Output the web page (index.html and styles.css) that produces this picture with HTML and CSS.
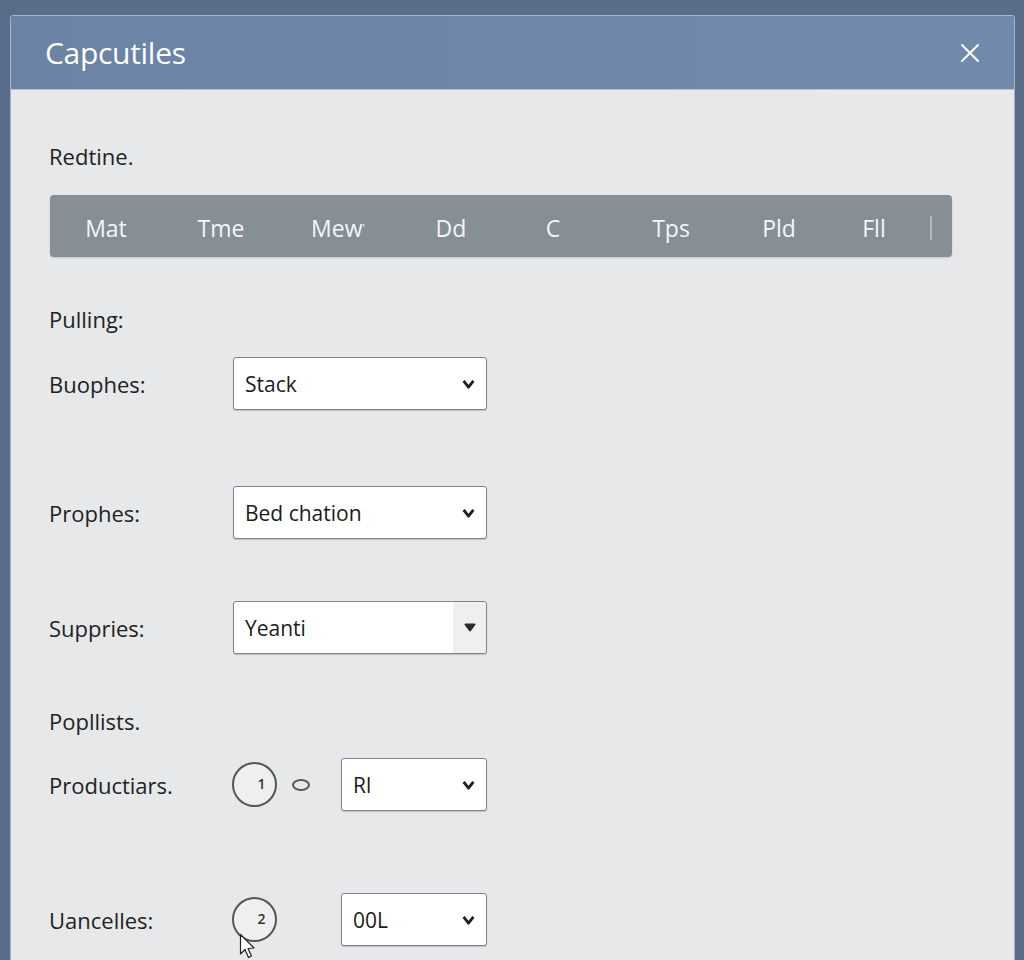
FILE: index.html
```html
<!DOCTYPE html>
<html lang="en">
	<head>
		<title>Capcutiles</title>
		<meta name="viewport" content="width=device-width, initial-scale=1">
		<link rel="stylesheet" href="styles.css">
	</head>
	<body>
		<div class="dialog">
			<div class="dialog-header">
				<h1>Capcutiles</h1>
				<button class="close-btn" aria-label="Close">
					<svg width="20" height="20" viewBox="0 0 20 20"><path d="M2 2 L18 18 M18 2 L2 18" stroke="#fff" stroke-width="2" stroke-linecap="round"/></svg>
				</button>
			</div>

			<div class="dialog-body">
				<div class="section-title">Redtine.</div>

				<div class="tab-bar">
					<span class="tab">Mat</span>
					<span class="tab">Tme</span>
					<span class="tab">Mew<span class="tick">'</span></span>
					<span class="tab">Dd</span>
					<span class="tab">C</span>
					<span class="tab">Tps</span>
					<span class="tab">Pld</span>
					<span class="tab">Fll</span>
					<span class="tab-sep"></span>
				</div>

				<div class="section-title pulling">Pulling:</div>

				<div class="field-row">
					<label>Buophes:</label>
					<div class="select">
						<span>Stack</span>
						<svg class="chevron" width="13" height="10" viewBox="0 0 13 10"><path d="M1.6 1.8 L6.5 8.2 L11.4 1.8" fill="none" stroke="#1e1e1e" stroke-width="2.8" stroke-linejoin="round"/></svg>
					</div>
				</div>

				<div class="field-row wide">
					<label>Prophes:</label>
					<div class="select">
						<span>Bed chation</span>
						<svg class="chevron" width="13" height="10" viewBox="0 0 13 10"><path d="M1.6 1.8 L6.5 8.2 L11.4 1.8" fill="none" stroke="#1e1e1e" stroke-width="2.8" stroke-linejoin="round"/></svg>
					</div>
				</div>

				<div class="field-row mid">
					<label>Suppries:</label>
					<div class="select has-button">
						<span>Yeanti</span>
						<span class="select-button">
							<svg width="12" height="9" viewBox="0 0 12 9"><path d="M1.5 1.5 L10.5 1.5 L6 7.5 Z" fill="#2a2a2a" stroke="#2a2a2a" stroke-width="2" stroke-linejoin="round"/></svg>
						</span>
					</div>
				</div>

				<div class="section-title lists">Popllists.</div>

				<div class="field-row near">
					<label class="short">Productiars.</label>
					<span class="step">1</span>
					<span class="oval"></span>
					<div class="select small">
						<span>Rl</span>
						<svg class="chevron" width="13" height="10" viewBox="0 0 13 10"><path d="M1.6 1.8 L6.5 8.2 L11.4 1.8" fill="none" stroke="#1e1e1e" stroke-width="2.8" stroke-linejoin="round"/></svg>
					</div>
				</div>

				<div class="field-row far">
					<label class="short">Uancelles:</label>
					<span class="step">2
						<svg class="cursor" width="20" height="28" viewBox="0 0 20 28"><path d="M1.5 1.5 L1.5 21 L6 16.5 L9.5 24.5 L12.5 23 L9 15.5 L15 15 Z" fill="#fff" stroke="#222" stroke-width="1.2" stroke-linejoin="round"/></svg>
					</span>
					<div class="select small spaced">
						<span>00L</span>
						<svg class="chevron" width="13" height="10" viewBox="0 0 13 10"><path d="M1.6 1.8 L6.5 8.2 L11.4 1.8" fill="none" stroke="#1e1e1e" stroke-width="2.8" stroke-linejoin="round"/></svg>
					</div>
				</div>
			</div>
		</div>
	</body>
</html>
```

FILE: styles.css
```css
body {
	margin: 0;
	padding: 15px 9px 0 10px;
	height: 960px;
	box-sizing: border-box;
	overflow: hidden;
	background-color: #596d8b;
	font-family: "Open Sans", "Noto Sans", sans-serif;
	color: #222;
}

.dialog {
	background-color: #e7e8ea;
	border: 1px solid #a3b4cb;
	border-radius: 3px 3px 0 0;
	height: 1000px;
}

.dialog-header {
	display: flex;
	align-items: center;
	justify-content: space-between;
	height: 74px;
	box-sizing: border-box;
	padding: 0 34px 0 34px;
	background: linear-gradient(to right, #6b83a4, #7189aa);
	border-bottom: 1px solid #b3c2d6;
}

.dialog-header h1 {
	margin: 0;
	font-size: 30px;
	font-weight: 400;
	color: #fff;
	letter-spacing: -0.3px;
}

.close-btn {
	border: none;
	background: none;
	padding: 0;
	width: 20px;
	height: 20px;
	cursor: pointer;
}

.dialog-body {
	display: flex;
	flex-direction: column;
	align-items: flex-start;
	padding: 51px 62px 0 38px;
}

.section-title {
	font-size: 22px;
	line-height: 30px;
}

.section-title.pulling {
	margin-top: 47px;
}

.section-title.lists {
	margin-top: 52px;
}

.tab-bar {
	display: grid;
	grid-template-columns: 110px 120px 114px 112px 92px 144px 72px 118px 2px;
	align-items: center;
	align-self: stretch;
	height: 62px;
	margin: 24px 0 0 1px;
	padding-left: 1px;
	background-color: #868e96;
	border-radius: 4px;
	box-shadow: 0px 1px 2px rgba(0, 0, 0, 0.15);
}

.tab {
	text-align: center;
	font-size: 23px;
	color: #f5f6f7;
	line-height: 30px;
	padding-top: 4px;
}

.tick {
	font-size: 11px;
	vertical-align: top;
}

.tab-sep {
	width: 2px;
	height: 24px;
	margin-left: -3px;
	margin-top: 4px;
	background-color: #b4b9be;
}

.field-row {
	display: flex;
	align-items: center;
	height: 53px;
	margin-top: 23px;
}

.field-row.wide {
	margin-top: 76px;
}

.field-row.mid {
	margin-top: 62px;
}

.field-row.near {
	margin-top: 22px;
}

.field-row.far {
	margin-top: 82px;
}

.field-row label {
	width: 184px;
	font-size: 22px;
	line-height: 30px;
	padding-top: 1px;
}

.field-row label.short {
	width: 183px;
}

.select {
	display: flex;
	align-items: center;
	justify-content: space-between;
	width: 254px;
	height: 53px;
	box-sizing: border-box;
	padding: 0 11px 0 11px;
	background-color: #fff;
	border: 1px solid #80858b;
	border-radius: 3px;
	box-shadow: 0px 1px 1px rgba(0, 0, 0, 0.18);
	font-size: 21px;
	color: #1c1c1c;
}

.select.has-button {
	padding-right: 0;
}

.select-button {
	display: flex;
	align-items: center;
	justify-content: center;
	width: 33px;
	height: 100%;
	background-color: #efeff0;
	border-radius: 0 3px 3px 0;
}

.select.small {
	width: 146px;
	margin-left: 31px;
}

.select.small.spaced {
	margin-left: 64px;
}

.step {
	position: relative;
	display: flex;
	align-items: center;
	justify-content: center;
	width: 45px;
	height: 45px;
	box-sizing: border-box;
	padding: 0 0 2px 14px;
	border: 2px solid #555;
	border-radius: 50%;
	background-color: #eeeff0;
	font-size: 14px;
	font-weight: 600;
	color: #333;
}

.oval {
	width: 18px;
	height: 12px;
	box-sizing: border-box;
	margin-left: 15px;
	border: 2px solid #555;
	border-radius: 50%;
}

.cursor {
	position: absolute;
	left: 5px;
	top: 34px;
}
```
